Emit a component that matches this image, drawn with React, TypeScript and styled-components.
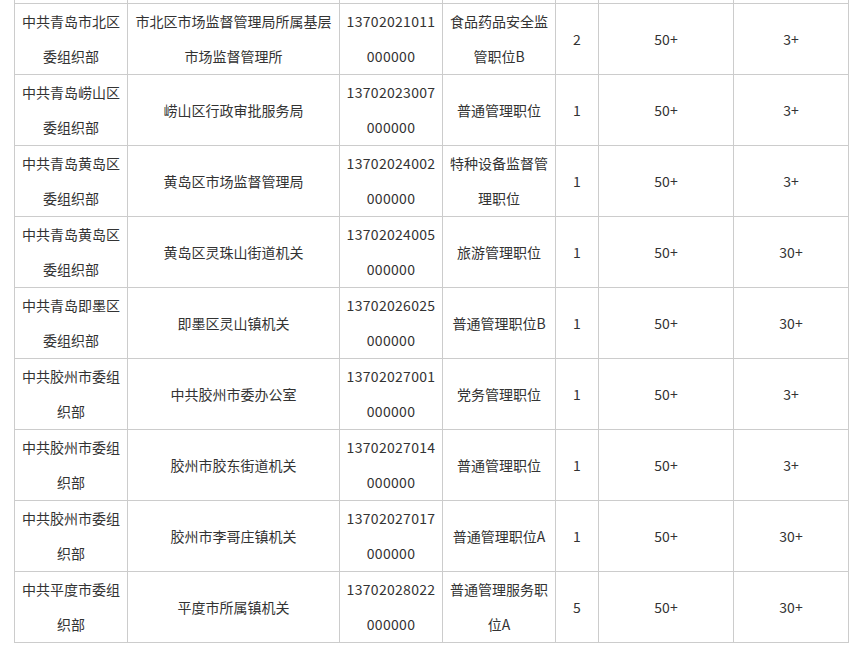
import styled, { createGlobalStyle } from 'styled-components'

const GlobalStyle = createGlobalStyle`
  html, body {
    margin: 0;
    padding: 0;
    background: #ffffff;
  }
`

type Row = {
  org: string
  unit: string
  code: string
  post: string
  count: string
  applied: string
  passed: string
}

const ROWS: Row[] = [
  { org: '中共青岛市北区委组织部', unit: '市北区市场监督管理局所属基层市场监督管理所', code: '13702021011000000', post: '食品药品安全监管职位B', count: '2', applied: '50+', passed: '3+' },
  { org: '中共青岛崂山区委组织部', unit: '崂山区行政审批服务局', code: '13702023007000000', post: '普通管理职位', count: '1', applied: '50+', passed: '3+' },
  { org: '中共青岛黄岛区委组织部', unit: '黄岛区市场监督管理局', code: '13702024002000000', post: '特种设备监督管理职位', count: '1', applied: '50+', passed: '3+' },
  { org: '中共青岛黄岛区委组织部', unit: '黄岛区灵珠山街道机关', code: '13702024005000000', post: '旅游管理职位', count: '1', applied: '50+', passed: '30+' },
  { org: '中共青岛即墨区委组织部', unit: '即墨区灵山镇机关', code: '13702026025000000', post: '普通管理职位B', count: '1', applied: '50+', passed: '30+' },
  { org: '中共胶州市委组织部', unit: '中共胶州市委办公室', code: '13702027001000000', post: '党务管理职位', count: '1', applied: '50+', passed: '3+' },
  { org: '中共胶州市委组织部', unit: '胶州市胶东街道机关', code: '13702027014000000', post: '普通管理职位', count: '1', applied: '50+', passed: '3+' },
  { org: '中共胶州市委组织部', unit: '胶州市李哥庄镇机关', code: '13702027017000000', post: '普通管理职位A', count: '1', applied: '50+', passed: '30+' },
  { org: '中共平度市委组织部', unit: '平度市所属镇机关', code: '13702028022000000', post: '普通管理服务职位A', count: '5', applied: '50+', passed: '30+' },
]

const COL_WIDTHS = [113, 212, 103, 113, 43, 135, 115]

const Page = styled.div`
  padding-left: 14px;
  height: 649px;
  overflow: hidden;
`

const Table = styled.table`
  width: 834px;
  table-layout: fixed;
  border-collapse: collapse;
  font-family: "Microsoft YaHei", "Noto Sans CJK SC", sans-serif;
  font-size: 14px;
  color: #333333;
`

const StubCell = styled.td`
  height: 3px;
  padding: 0;
  border: 1px solid #cccccc;
  border-top: none;
`

const Cell = styled.td<{ $code?: boolean }>`
  border: 1px solid #cccccc;
  padding: 0 ${p => (p.$code ? '6px' : '5px')};
  height: 70px;
  line-height: 35px;
  text-align: center;
  vertical-align: middle;
  word-break: ${p => (p.$code ? 'break-all' : 'normal')};
  letter-spacing: ${p => (p.$code ? '0.3px' : 'normal')};
`

export default function App() {
  return (
    <>
      <GlobalStyle />
      <Page>
        <Table>
          <colgroup>
            {COL_WIDTHS.map((w, i) => (
              <col key={i} style={{ width: w }} />
            ))}
          </colgroup>
          <tbody>
            <tr>
              {COL_WIDTHS.map((_, i) => (
                <StubCell key={i} />
              ))}
            </tr>
            {ROWS.map((r, i) => (
              <tr key={i}>
                <Cell>{r.org}</Cell>
                <Cell>{r.unit}</Cell>
                <Cell $code>{r.code}</Cell>
                <Cell>{r.post}</Cell>
                <Cell>{r.count}</Cell>
                <Cell>{r.applied}</Cell>
                <Cell>{r.passed}</Cell>
              </tr>
            ))}
          </tbody>
        </Table>
      </Page>
    </>
  )
}
